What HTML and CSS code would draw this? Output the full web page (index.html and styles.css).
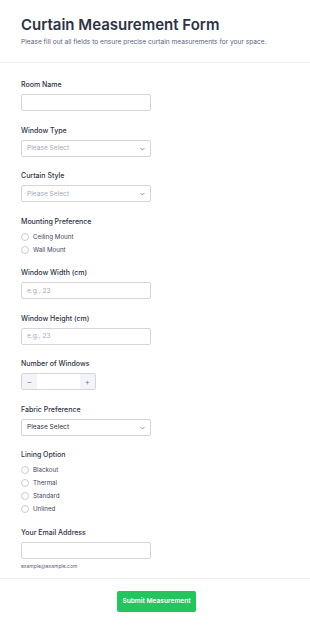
FILE: index.html
```html
<!DOCTYPE html>
<html lang="en">
<head>
  <meta charset="UTF-8">
  <meta name="viewport" content="width=device-width, initial-scale=1.0">
  <title>Curtain Measurement Form</title>
  <link rel="stylesheet" href="styles.css">
</head>
<body>
  <div class="form">
    <div class="form-header">
      <h1>Curtain Measurement Form</h1>
      <p>Please fill out all fields to ensure precise curtain measurements for your space.</p>
    </div>

    <div class="form-body">
      <div class="field">
        <label>Room Name</label>
        <input type="text" class="text-input">
      </div>

      <div class="field">
        <label>Window Type</label>
        <div class="select-wrap">
          <select class="select empty">
            <option>Please Select</option>
          </select>
          <svg class="chevron" viewBox="0 0 8 5" width="5" height="4"><path d="M1 1l3 3 3-3" fill="none" stroke="#7a8296" stroke-width="1.4"/></svg>
        </div>
      </div>

      <div class="field">
        <label>Curtain Style</label>
        <div class="select-wrap">
          <select class="select empty">
            <option>Please Select</option>
          </select>
          <svg class="chevron" viewBox="0 0 8 5" width="5" height="4"><path d="M1 1l3 3 3-3" fill="none" stroke="#7a8296" stroke-width="1.4"/></svg>
        </div>
      </div>

      <div class="field">
        <label>Mounting Preference</label>
        <div class="radio-list">
          <div class="radio"><span class="circle"></span>Ceiling Mount</div>
          <div class="radio"><span class="circle"></span>Wall Mount</div>
        </div>
      </div>

      <div class="field">
        <label>Window Width (cm)</label>
        <input type="text" class="text-input" placeholder="e.g., 23">
      </div>

      <div class="field">
        <label>Window Height (cm)</label>
        <input type="text" class="text-input" placeholder="e.g., 23">
      </div>

      <div class="field">
        <label>Number of Windows</label>
        <div class="stepper">
          <span class="step">&minus;</span>
          <span class="step-value"></span>
          <span class="step">+</span>
        </div>
      </div>

      <div class="field">
        <label>Fabric Preference</label>
        <div class="select-wrap">
          <select class="select">
            <option>Please Select</option>
          </select>
          <svg class="chevron" viewBox="0 0 8 5" width="5" height="4"><path d="M1 1l3 3 3-3" fill="none" stroke="#7a8296" stroke-width="1.4"/></svg>
        </div>
      </div>

      <div class="field">
        <label>Lining Option</label>
        <div class="radio-list">
          <div class="radio"><span class="circle"></span>Blackout</div>
          <div class="radio"><span class="circle"></span>Thermal</div>
          <div class="radio"><span class="circle"></span>Standard</div>
          <div class="radio"><span class="circle"></span>Unlined</div>
        </div>
      </div>

      <div class="field">
        <label>Your Email Address</label>
        <input type="text" class="text-input">
        <div class="hint">example@example.com</div>
      </div>
    </div>

    <div class="form-footer">
      <button class="submit">Submit Measurement</button>
    </div>
  </div>
</body>
</html>
```

FILE: styles.css
```css
body {
  margin: 0;
  font-family: Inter, 'Noto Sans', sans-serif;
  background: #fff;
  color: #2c3345;
}

.form-header {
  padding: 16px 21px 15px;
  border-bottom: 1px solid #eceef2;
}

h1 {
  margin: 0;
  font-size: 15px;
  line-height: 18px;
  font-weight: 600;
  color: #2c3345;
}

.form-header p {
  margin: 3px 0 0;
  font-size: 6.6px;
  line-height: 10px;
  color: #57647e;
}

.form-body {
  padding: 17px 21px 8px;
  display: flex;
  flex-direction: column;
  gap: 14.5px;
}

.field {
  display: flex;
  flex-direction: column;
}

.field label {
  font-size: 7px;
  line-height: 10px;
  font-weight: 500;
  color: #2c3345;
  margin-bottom: 4px;
}

.text-input,
.select {
  display: block;
  box-sizing: border-box;
  width: 130px;
  height: 17px;
  margin: 0;
  padding: 0 5px;
  border: 1px solid #d3d6df;
  border-radius: 2px;
  background: #fff;
  font-family: inherit;
  font-size: 6.6px;
  color: #2c3345;
  outline: none;
}

.text-input::placeholder {
  color: #a3aabb;
}

.select-wrap {
  position: relative;
  width: 130px;
  height: 17px;
}

.select {
  appearance: none;
  -webkit-appearance: none;
}

.select.empty {
  color: #a3aabb;
}

.chevron {
  position: absolute;
  right: 6px;
  top: 7px;
}

.radio-list {
  display: flex;
  flex-direction: column;
  gap: 5px;
  padding-top: 2px;
}

.radio {
  display: flex;
  align-items: center;
  gap: 4px;
  font-size: 6.2px;
  line-height: 8px;
  color: #3e465a;
}

.circle {
  box-sizing: border-box;
  width: 8px;
  height: 8px;
  border: 1px solid #c8cdd8;
  border-radius: 50%;
}

.stepper {
  display: flex;
  box-sizing: border-box;
  width: 75px;
  height: 17px;
  border: 1px solid #d3d6df;
  border-radius: 2px;
  overflow: hidden;
}

.step {
  width: 15px;
  display: flex;
  align-items: center;
  justify-content: center;
  background: #f3f4f7;
  color: #7a8296;
  font-size: 8px;
}

.step-value {
  flex: 1;
  background: #fff;
}

.hint {
  margin-top: 4px;
  font-size: 5px;
  line-height: 7px;
  color: #57647e;
}

.form-footer {
  border-top: 1px solid #eceef2;
  padding: 12px 0;
  display: flex;
  justify-content: center;
}

.submit {
  width: 79px;
  height: 21px;
  padding: 0;
  border: none;
  border-radius: 2px;
  background: #22c55e;
  color: #fff;
  font-family: inherit;
  font-size: 6.6px;
  font-weight: 600;
  margin-left: 3px;
}
```
